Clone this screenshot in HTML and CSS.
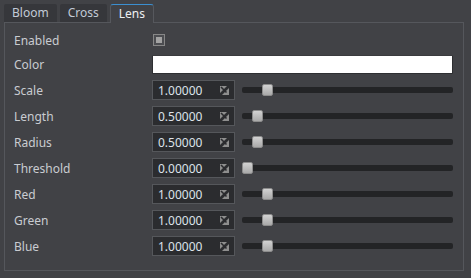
FILE: index.html
```html
<!DOCTYPE html>
<html>
<head>
<meta charset="utf-8">
<link rel="stylesheet" href="styles.css">
</head>
<body>
<div class="tabs">
  <div class="tab">Bloom</div>
  <div class="tab">Cross</div>
  <div class="tab active">Lens</div>
</div>
<div class="panel">
  <div class="form">
    <div class="row first"><div class="label">Enabled</div><div class="ctrl"><span class="check"><span class="check-fill"></span></span></div></div>
    <div class="row colorrow"><div class="label">Color</div><div class="ctrl"><div class="colorbox"></div></div></div>
    <div class="row"><div class="label">Scale</div><div class="ctrl"><div class="spin"><span class="val">1.00000</span><svg class="ico" width="9" height="9" viewBox="0 0 9 9"><path d="M0 0H7L0 7Z" fill="#8e8e8e"/><path d="M9 2V9H2Z" fill="#8e8e8e"/><path d="M1 1L6.5 6.5" stroke="#2a2b2e" stroke-width="1.6"/></svg></div><div class="slider"><div class="groove"></div><div class="handle" style="left:20px"></div></div></div></div>
    <div class="row"><div class="label">Length</div><div class="ctrl"><div class="spin"><span class="val">0.50000</span><svg class="ico" width="9" height="9" viewBox="0 0 9 9"><path d="M0 0H7L0 7Z" fill="#8e8e8e"/><path d="M9 2V9H2Z" fill="#8e8e8e"/><path d="M1 1L6.5 6.5" stroke="#2a2b2e" stroke-width="1.6"/></svg></div><div class="slider"><div class="groove"></div><div class="handle" style="left:10px"></div></div></div></div>
    <div class="row"><div class="label">Radius</div><div class="ctrl"><div class="spin"><span class="val">0.50000</span><svg class="ico" width="9" height="9" viewBox="0 0 9 9"><path d="M0 0H7L0 7Z" fill="#8e8e8e"/><path d="M9 2V9H2Z" fill="#8e8e8e"/><path d="M1 1L6.5 6.5" stroke="#2a2b2e" stroke-width="1.6"/></svg></div><div class="slider"><div class="groove"></div><div class="handle" style="left:10px"></div></div></div></div>
    <div class="row"><div class="label">Threshold</div><div class="ctrl"><div class="spin"><span class="val">0.00000</span><svg class="ico" width="9" height="9" viewBox="0 0 9 9"><path d="M0 0H7L0 7Z" fill="#8e8e8e"/><path d="M9 2V9H2Z" fill="#8e8e8e"/><path d="M1 1L6.5 6.5" stroke="#2a2b2e" stroke-width="1.6"/></svg></div><div class="slider"><div class="groove"></div><div class="handle" style="left:0px"></div></div></div></div>
    <div class="row"><div class="label">Red</div><div class="ctrl"><div class="spin"><span class="val">1.00000</span><svg class="ico" width="9" height="9" viewBox="0 0 9 9"><path d="M0 0H7L0 7Z" fill="#8e8e8e"/><path d="M9 2V9H2Z" fill="#8e8e8e"/><path d="M1 1L6.5 6.5" stroke="#2a2b2e" stroke-width="1.6"/></svg></div><div class="slider"><div class="groove"></div><div class="handle" style="left:20px"></div></div></div></div>
    <div class="row"><div class="label">Green</div><div class="ctrl"><div class="spin"><span class="val">1.00000</span><svg class="ico" width="9" height="9" viewBox="0 0 9 9"><path d="M0 0H7L0 7Z" fill="#8e8e8e"/><path d="M9 2V9H2Z" fill="#8e8e8e"/><path d="M1 1L6.5 6.5" stroke="#2a2b2e" stroke-width="1.6"/></svg></div><div class="slider"><div class="groove"></div><div class="handle" style="left:20px"></div></div></div></div>
    <div class="row"><div class="label">Blue</div><div class="ctrl"><div class="spin"><span class="val">1.00000</span><svg class="ico" width="9" height="9" viewBox="0 0 9 9"><path d="M0 0H7L0 7Z" fill="#8e8e8e"/><path d="M9 2V9H2Z" fill="#8e8e8e"/><path d="M1 1L6.5 6.5" stroke="#2a2b2e" stroke-width="1.6"/></svg></div><div class="slider"><div class="groove"></div><div class="handle" style="left:20px"></div></div></div></div>
  </div>
</div>
</body>
</html>
```
FILE: styles.css
```css
html, body {
  margin: 0;
  padding: 0;
  background: #414246;
  width: 471px;
  height: 278px;
  overflow: hidden;
  font-family: "Noto Sans", "Open Sans", sans-serif;
  font-size: 12px;
  color: #c9ccd1;
}
.tabs {
  display: flex;
  align-items: flex-end;
  gap: 3px;
  padding: 4px 0 0 4px;
  height: 18px;
}
.tab {
  box-sizing: border-box;
  height: 18px;
  padding: 0 8px;
  background: #36373b;
  color: #c2cad6;
  line-height: 18px;
  border-radius: 2px 2px 0 0;
}
.tab.active {
  position: relative;
  z-index: 1;
  height: 19px;
  margin-bottom: -1px;
  padding: 0 8px;
  background: #414246;
  color: #eef0f3;
  border: 1px solid #56585d;
  border-top-color: #3b8fd0;
  border-bottom: none;
  border-radius: 3px 3px 0 0;
  line-height: 17px;
}
.panel {
  box-sizing: border-box;
  margin-left: 4px;
  width: 460px;
  height: 249px;
  border: 1px solid #55575c;
}
.form {
  display: flex;
  flex-direction: column;
  padding: 7px 10px 0 9px;
}
.row {
  display: flex;
  align-items: center;
  height: 20px;
  margin-top: 6px;
}
.row.first { margin-top: 0; }
.row.colorrow { margin-top: 4px; align-items: flex-start; }
.row.colorrow .label { align-self: center; }
.label {
  width: 138px;
  flex: none;
}
.ctrl {
  flex: 1;
  display: flex;
  align-items: center;
  height: 20px;
}
.check {
  box-sizing: border-box;
  width: 12px;
  height: 12px;
  margin-left: 1px;
  border: 1px solid #878787;
  background: #4c4d51;
  padding: 2px;
  display: flex;
}
.check-fill {
  flex: 1;
  background: #a3a3a3;
}
.colorbox {
  box-sizing: border-box;
  width: 301px;
  height: 19px;
  background: #ffffff;
  border: 1px solid #2e2f32;
  border-top-color: #3a3b3e;
  border-radius: 1px;
}
.spin {
  box-sizing: border-box;
  width: 83px;
  height: 20px;
  flex: none;
  display: flex;
  align-items: center;
  justify-content: space-between;
  padding: 0 5px 0 5px;
  background: #2b2c2f;
  border: 1px solid #55575b;
  color: #dde3ea;
}
.ico { display: block; }
.slider {
  position: relative;
  flex: 1;
  margin-left: 7px;
  height: 20px;
  display: flex;
  align-items: center;
}
.groove {
  flex: 1;
  height: 6px;
  background: #232426;
  border-radius: 2px;
}
.handle {
  position: absolute;
  top: 4px;
  box-sizing: border-box;
  width: 11px;
  height: 12px;
  border-radius: 2px;
  border: 1px solid #8c8c8c;
  background: linear-gradient(#d2d2d2, #a9a9a9);
}
```
